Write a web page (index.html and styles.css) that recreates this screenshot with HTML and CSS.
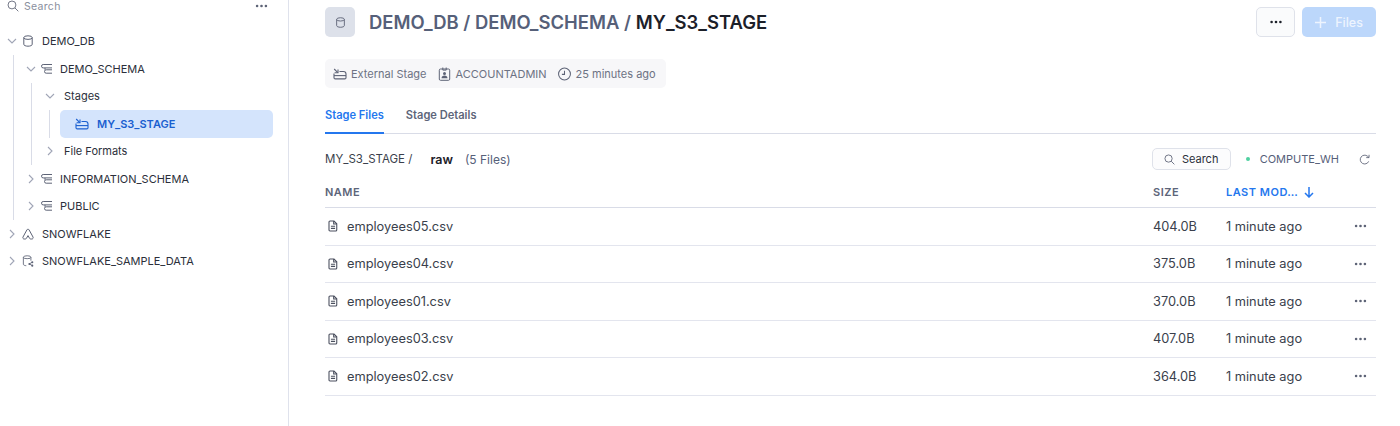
FILE: index.html
```html
<!DOCTYPE html>
<html lang="en">
<head>
    <meta charset="UTF-8">
    <title>MY_S3_STAGE</title>
    <link rel="stylesheet" href="styles.css">
</head>
<body>
    <svg class="sprites" width="0" height="0">
        <symbol id="i-down" viewBox="0 0 12 12"><path d="M2 4l4 4 4-4" fill="none" stroke="currentColor" stroke-width="1.1"/></symbol>
        <symbol id="i-right" viewBox="0 0 12 12"><path d="M4 2l4 4-4 4" fill="none" stroke="currentColor" stroke-width="1.1"/></symbol>
        <symbol id="i-db" viewBox="0 0 12 12"><g fill="none" stroke="currentColor" stroke-width="1"><ellipse cx="6" cy="2.6" rx="4.2" ry="1.8"/><path d="M1.8 2.6v6.8c0 1 1.9 1.8 4.2 1.8s4.2-.8 4.2-1.8V2.6"/></g></symbol>
        <symbol id="i-schema" viewBox="0 0 12 12"><g fill="none" stroke="currentColor" stroke-width="1"><path d="M11 1.5H2.2a1.700 1.700 0 0 0 0 3.400H11"/><path d="M4 4.900v1.900"/><path d="M11 6.800H5.200a1.700 1.700 0 0 0 0 3.400H11"/></g></symbol>
        <symbol id="i-stage" viewBox="0 0 14 12"><g fill="none" stroke="currentColor" stroke-width="1.1"><path d="M1 5.500v4.200c0 .7.5 1.200 1.200 1.200h9.600c.7 0 1.200-.5 1.200-1.200V6c0-1.400-1.100-2.500-2.500-2.500H6.500"/><path d="M1 7.600h12"/><path d="M1.200 1l3.600 3.600"/><path d="M5 1.400v3.400H1.600"/></g></symbol>
        <symbol id="i-flake" viewBox="0 0 12 12"><path d="M6 1.200c-.5 0-.9.3-1.100.7L1 9c-.5 1 .1 2 1.200 2h1.200c.4 0 .8-.2 1-.6L6 7.600l1.600 2.800c.2.4.6.6 1 .6h1.200c1.100 0 1.700-1 1.200-2L7.100 1.900C6.900 1.500 6.500 1.200 6 1.200z" fill="none" stroke="currentColor" stroke-width="1"/></symbol>
        <symbol id="i-shared" viewBox="0 0 14 14"><g fill="none" stroke="currentColor" stroke-width="1"><ellipse cx="6" cy="2.600" rx="4.400" ry="1.700"/><path d="M1.600 2.600v8.200c0 1 1.600 1.600 3.400 1.700"/><path d="M10.400 2.600v4"/><path d="M8.600 10.400l3.400-2M8.600 10.400l3.400 2"/></g><circle cx="8.600" cy="10.400" r="1.200" fill="currentColor"/><circle cx="12" cy="8.400" r="1.200" fill="currentColor"/><circle cx="12" cy="12.400" r="1.200" fill="currentColor"/></symbol>
        <symbol id="i-search" viewBox="0 0 14 14"><g fill="none" stroke="currentColor" stroke-width="1.100"><circle cx="5.800" cy="5.800" r="4.600"/><path d="M9.200 9.200l4 4"/></g></symbol>
        <symbol id="i-file" viewBox="0 0 12 14"><g fill="none" stroke="currentColor" stroke-width="1.300"><path d="M2.400 1h4.800L10.500 4.300v7.500c0 .7-.5 1.200-1.200 1.200H2.400c-.7 0-1.200-.5-1.200-1.200V2.200C1.200 1.500 1.700 1 2.400 1z"/><path d="M6.800 1v3.600h3.700"/><path d="M3.500 7.200h5M3.500 9.800h5"/></g></symbol>
        <symbol id="i-badge" viewBox="0 0 12 14"><g fill="none" stroke="currentColor" stroke-width="1"><rect x=".8" y="2" width="10.400" height="11.300" rx="1.200"/><path d="M4.300.5v2.600h3.400V.5"/></g><circle cx="6" cy="6.600" r="1.500" fill="currentColor"/><path d="M3 11.200c0-1.700 1.300-2.600 3-2.600s3 .9 3 2.600z" fill="currentColor"/></symbol>
        <symbol id="i-clock" viewBox="0 0 14 14"><g fill="none" stroke="currentColor" stroke-width="1.100"><circle cx="7" cy="7" r="6.400"/><path d="M7 3.400V7.400H4.200"/></g></symbol>
        <symbol id="i-refresh" viewBox="0 0 14 14"><g fill="none" stroke="currentColor" stroke-width="1.100"><path d="M12.300 9.400A5.600 5.600 0 1 1 10.800 2.800L12.600 4.400"/><path d="M12.800 1v3.600H9.200"/></g></symbol>
        <symbol id="i-more" viewBox="0 0 12 4"><circle cx="1.600" cy="2" r="1.300" fill="currentColor"/><circle cx="6" cy="2" r="1.300" fill="currentColor"/><circle cx="10.400" cy="2" r="1.300" fill="currentColor"/></symbol>
    </svg>

    <div class="page">
        <aside class="sidebar">
            <div class="side-search">
                <svg class="ico-search"><use href="#i-search"/></svg>
                <span class="side-search-text">Search</span>
                <svg class="ico-more side-more"><use href="#i-more"/></svg>
            </div>

            <div class="tree">
                <div class="row row-db">
                    <svg class="chev"><use href="#i-down"/></svg>
                    <svg class="ico"><use href="#i-db"/></svg>
                    <span>DEMO_DB</span>
                </div>
                <div class="branch branch-db">
                    <div class="row row-schema">
                        <svg class="chev"><use href="#i-down"/></svg>
                        <svg class="ico"><use href="#i-schema"/></svg>
                        <span>DEMO_SCHEMA</span>
                    </div>
                    <div class="branch branch-schema">
                        <div class="row row-group">
                            <svg class="chev"><use href="#i-down"/></svg>
                            <span>Stages</span>
                        </div>
                        <div class="branch branch-group">
                            <div class="row row-selected">
                                <svg class="ico-stage"><use href="#i-stage"/></svg>
                                <span>MY_S3_STAGE</span>
                            </div>
                        </div>
                        <div class="row row-group">
                            <svg class="chev"><use href="#i-right"/></svg>
                            <span>File Formats</span>
                        </div>
                    </div>
                    <div class="row row-schema">
                        <svg class="chev"><use href="#i-right"/></svg>
                        <svg class="ico"><use href="#i-schema"/></svg>
                        <span>INFORMATION_SCHEMA</span>
                    </div>
                    <div class="row row-schema">
                        <svg class="chev"><use href="#i-right"/></svg>
                        <svg class="ico"><use href="#i-schema"/></svg>
                        <span>PUBLIC</span>
                    </div>
                </div>
                <div class="row row-db">
                    <svg class="chev"><use href="#i-right"/></svg>
                    <svg class="ico"><use href="#i-flake"/></svg>
                    <span>SNOWFLAKE</span>
                </div>
                <div class="row row-db">
                    <svg class="chev"><use href="#i-right"/></svg>
                    <svg class="ico"><use href="#i-shared"/></svg>
                    <span>SNOWFLAKE_SAMPLE_DATA</span>
                </div>
            </div>
        </aside>

        <main class="content">
            <header class="head">
                <div class="head-icon"><svg class="ico-head"><use href="#i-db"/></svg></div>
                <h1 class="crumbs">DEMO_DB / DEMO_SCHEMA / <b>MY_S3_STAGE</b></h1>
                <button class="btn-more"><svg class="ico-more-dark"><use href="#i-more"/></svg></button>
                <button class="btn-files">
                    <svg class="plus" viewBox="0 0 11 11"><path d="M5.500 0v11M0 5.500h11" fill="none" stroke="currentColor" stroke-width="1.500"/></svg>
                    Files
                </button>
            </header>

            <div class="meta">
                <span class="meta-item"><svg class="ico-meta-stage"><use href="#i-stage"/></svg>External Stage</span>
                <span class="meta-item"><svg class="ico-meta"><use href="#i-badge"/></svg>ACCOUNTADMIN</span>
                <span class="meta-item"><svg class="ico-meta"><use href="#i-clock"/></svg>25 minutes ago</span>
            </div>

            <nav class="tabs">
                <a class="tab active">Stage Files</a>
                <a class="tab">Stage Details</a>
            </nav>

            <div class="toolbar">
                <span class="path">MY_S3_STAGE /</span>
                <b class="folder">raw</b>
                <span class="count">(5 Files)</span>
                <button class="btn-search"><svg class="ico-search-sm"><use href="#i-search"/></svg>Search</button>
                <span class="dot"></span>
                <span class="warehouse">COMPUTE_WH</span>
                <svg class="ico-refresh"><use href="#i-refresh"/></svg>
            </div>

            <div class="grid grid-head">
                <span>NAME</span>
                <span>SIZE</span>
                <span class="sorted">LAST MOD…
                    <svg class="arrow" viewBox="0 0 10 12"><path d="M5 1v10M1 7l4 4 4-4" fill="none" stroke="currentColor" stroke-width="1.500"/></svg>
                </span>
                <span></span>
            </div>

            <div class="grid file-row">
                <span class="name"><svg class="ico-file"><use href="#i-file"/></svg>employees05.csv</span>
                <span>404.0B</span>
                <span>1 minute ago</span>
                <svg class="ico-row-more"><use href="#i-more"/></svg>
            </div>
            <div class="grid file-row">
                <span class="name"><svg class="ico-file"><use href="#i-file"/></svg>employees04.csv</span>
                <span>375.0B</span>
                <span>1 minute ago</span>
                <svg class="ico-row-more"><use href="#i-more"/></svg>
            </div>
            <div class="grid file-row">
                <span class="name"><svg class="ico-file"><use href="#i-file"/></svg>employees01.csv</span>
                <span>370.0B</span>
                <span>1 minute ago</span>
                <svg class="ico-row-more"><use href="#i-more"/></svg>
            </div>
            <div class="grid file-row">
                <span class="name"><svg class="ico-file"><use href="#i-file"/></svg>employees03.csv</span>
                <span>407.0B</span>
                <span>1 minute ago</span>
                <svg class="ico-row-more"><use href="#i-more"/></svg>
            </div>
            <div class="grid file-row">
                <span class="name"><svg class="ico-file"><use href="#i-file"/></svg>employees02.csv</span>
                <span>364.0B</span>
                <span>1 minute ago</span>
                <svg class="ico-row-more"><use href="#i-more"/></svg>
            </div>
        </main>
    </div>
</body>
</html>
```

FILE: styles.css
```css
* {
    box-sizing: border-box;
}

body {
    margin: 0;
    font-family: Inter, "Noto Sans", sans-serif;
    color: #2b2f3a;
    background-color: #ffffff;
    overflow: hidden;
}

button {
    font-family: inherit;
    padding: 0;
}

.sprites {
    display: block;
    height: 0;
}

.page {
    display: flex;
    height: 426px;
}

/* sidebar */
.sidebar {
    width: 289px;
    flex: none;
    border-right: 1px solid #dfe2ec;
}

.side-search {
    display: flex;
    align-items: center;
    height: 12px;
    padding-left: 7px;
    color: #8a8f9e;
    font-size: 10.5px;
}

.ico-search {
    width: 12px;
    height: 12px;
    color: #6b7080;
    margin-right: 5px;
}

.side-search-text {
    letter-spacing: 0.3px;
}

.side-more {
    width: 13px;
    height: 4px;
    margin-left: 194px;
    color: #5d6376;
}

.tree {
    margin-top: 15.5px;
    font-size: 11px;
}

.row {
    display: flex;
    align-items: center;
    height: 27.5px;
    white-space: nowrap;
}

.chev {
    width: 12px;
    height: 12px;
    color: #a0a5b6;
    flex: none;
}

.ico {
    width: 12px;
    height: 12px;
    color: #5d6376;
    flex: none;
}

.row-db {
    padding-left: 6px;
}

.row-db .ico {
    margin: 0 8px 0 4px;
}

.row-schema {
    padding-left: 11px;
}

.row-schema .ico {
    margin: 0 7px 0 4px;
}

.row-group {
    padding-left: 12px;
}

.row-group .chev {
    margin-right: 8px;
}

.branch {
    border-left: 1px solid #d9dce7;
}

.branch-db {
    margin-left: 13px;
}

.branch-schema {
    margin-left: 17px;
}

.branch-group {
    margin-left: 17px;
}

.row-selected {
    margin-left: 10px;
    width: 213px;
    padding-left: 15px;
    background-color: #d4e4fc;
    border-radius: 5px;
    color: #1a5fd0;
    font-weight: 600;
}

.ico-stage {
    width: 14px;
    height: 12px;
    margin-right: 8px;
    color: #1a5fd0;
}

/* main column */
.content {
    flex: 1;
    padding: 7px 24px 0 36px;
    min-width: 0;
}

.head {
    display: flex;
    align-items: center;
    height: 30px;
}

.head-icon {
    display: flex;
    align-items: center;
    justify-content: center;
    width: 30px;
    height: 30px;
    background-color: #dde1ea;
    border-radius: 5px;
    color: #5d6376;
}

.ico-head {
    width: 11px;
    height: 11px;
}

.crumbs {
    margin: 0 0 0 14px;
    font-size: 18.45px;
    font-weight: 600;
    color: #566079;
    flex: 1;
}

.crumbs b {
    font-weight: 600;
    color: #1c2029;
}

.btn-more {
    display: flex;
    align-items: center;
    justify-content: center;
    width: 39px;
    height: 30px;
    background-color: #fafbfc;
    border: 1px solid #dfe2ea;
    border-radius: 5px;
    color: #1c2029;
}

.ico-more-dark {
    width: 12px;
    height: 4px;
}

.btn-files {
    display: flex;
    align-items: center;
    justify-content: center;
    gap: 9px;
    width: 74px;
    height: 30px;
    margin-left: 7px;
    background-color: #bcd7fb;
    border: none;
    border-radius: 5px;
    color: #edf4fe;
    font-size: 12.5px;
    font-weight: 500;
}

.plus {
    width: 11px;
    height: 11px;
}

.meta {
    display: inline-flex;
    align-items: center;
    gap: 11px;
    height: 29px;
    margin-top: 22px;
    padding: 0 10px 0 8px;
    background-color: #f7f7f9;
    border-radius: 5px;
    font-size: 11px;
    color: #6d7283;
}

.meta-item {
    display: flex;
    align-items: center;
}

.ico-meta-stage {
    width: 14px;
    height: 12px;
    margin-right: 4px;
    color: #5d6376;
}

.ico-meta {
    width: 13px;
    height: 14px;
    margin-right: 5px;
    color: #5d6376;
}

.tabs {
    display: flex;
    gap: 22px;
    height: 46px;
    border-bottom: 1px solid #d9dce7;
    font-size: 11.1px;
    font-weight: 600;
}

.tab {
    display: block;
    height: 46px;
    padding-top: 20px;
    color: #5d6579;
}

.tab.active {
    color: #2477ee;
    border-bottom: 2px solid #2477ee;
}

.toolbar {
    display: flex;
    align-items: center;
    height: 34px;
    margin-top: 8px;
    font-size: 12px;
}

.path {
    color: #3a3f4c;
    font-size: 11.5px;
}

.folder {
    margin-left: 18px;
    font-size: 12.5px;
    font-weight: 600;
    color: #1c2029;
}

.count {
    margin-left: 12px;
    color: #566079;
    flex: 1;
}

.btn-search {
    display: flex;
    align-items: center;
    justify-content: center;
    width: 79px;
    height: 22px;
    background-color: #fcfcfd;
    border: 1px solid #dfe2ea;
    border-radius: 5px;
    color: #2b2f3a;
    font-size: 11px;
    font-weight: 400;
}

.ico-search-sm {
    width: 11px;
    height: 11px;
    margin-right: 7px;
    color: #5d6376;
}

.dot {
    width: 4px;
    height: 4px;
    margin-left: 15px;
    border-radius: 50%;
    background-color: #4fd0a0;
}

.warehouse {
    margin-left: 10px;
    color: #566079;
    font-size: 11px;
}

.ico-refresh {
    width: 11px;
    height: 11px;
    margin-left: 20px;
    margin-right: 6px;
    color: #5d6376;
}

.grid {
    display: grid;
    grid-template-columns: 828px 73px 127px 23px;
    align-items: center;
}

.grid-head {
    height: 32px;
    border-bottom: 1px solid #d9dce7;
    font-size: 11px;
    font-weight: 600;
    letter-spacing: 0.5px;
    color: #5d6579;
}

.sorted {
    display: flex;
    align-items: center;
    color: #2477ee;
}

.arrow {
    width: 10px;
    height: 12px;
    margin-left: 6px;
}

.file-row {
    height: 37.5px;
    border-bottom: 1px solid #e3e5ee;
    font-size: 12.8px;
    color: #3a3f4c;
}

.name {
    display: flex;
    align-items: center;
}

.ico-file {
    width: 10px;
    height: 12px;
    margin: 0 9px 0 3px;
    color: #4a4f5e;
}

.ico-row-more {
    width: 13px;
    height: 4px;
    color: #5d6376;
    margin-left: 1px;
}
```
